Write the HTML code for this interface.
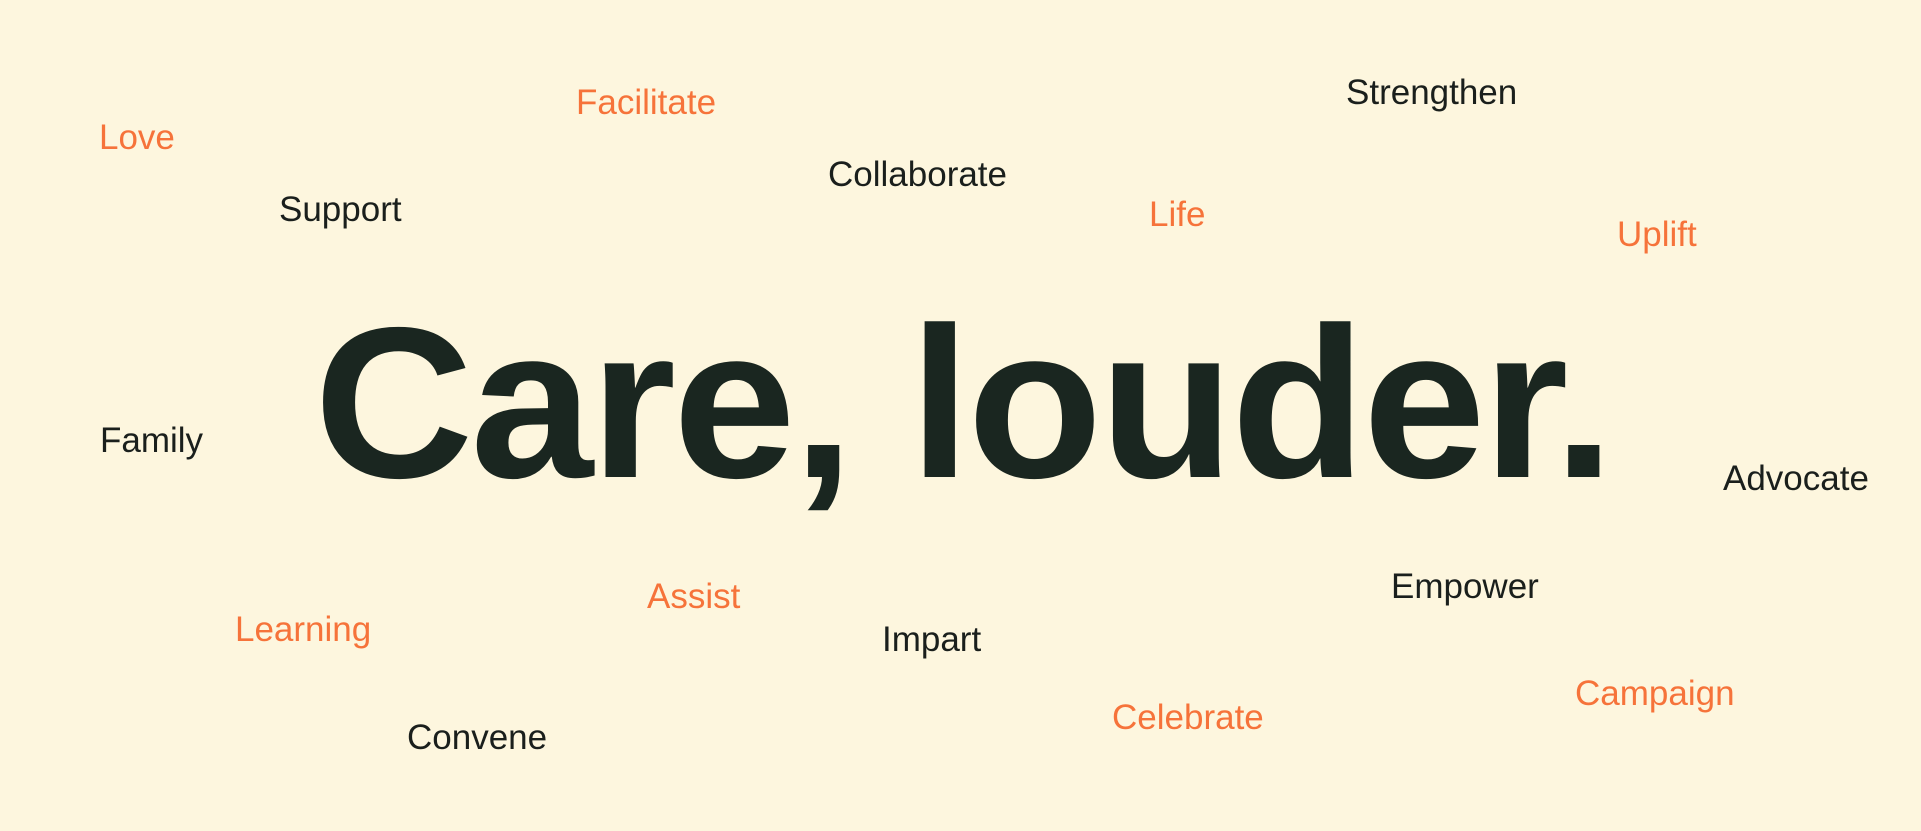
<!DOCTYPE html>
<html><head><meta charset="utf-8"><style>
html,body{margin:0;padding:0}
body{width:1921px;height:831px;background:#fdf6de;position:relative;overflow:hidden;font-family:"Liberation Sans",sans-serif}
.w{position:absolute;font-size:35px;line-height:1;white-space:nowrap;color:#1a1f1c}
.o{color:#f6733a}
.big{position:absolute;left:314px;top:295px;font-size:215px;line-height:1;font-weight:bold;letter-spacing:-3px;color:#1a2620;white-space:nowrap;transform:scaleX(1.027);transform-origin:0 0}
</style></head><body>
<div class="big">Care, louder.</div>
<div class="w o" style="left:99px;top:120px">Love</div>
<div class="w o" style="left:576px;top:85px">Facilitate</div>
<div class="w" style="left:1346px;top:75px">Strengthen</div>
<div class="w" style="left:828px;top:157px">Collaborate</div>
<div class="w" style="left:279px;top:192px">Support</div>
<div class="w o" style="left:1149px;top:197px">Life</div>
<div class="w o" style="left:1617px;top:217px">Uplift</div>
<div class="w" style="left:100px;top:423px">Family</div>
<div class="w" style="left:1723px;top:461px">Advocate</div>
<div class="w o" style="left:647px;top:579px">Assist</div>
<div class="w" style="left:1391px;top:569px">Empower</div>
<div class="w o" style="left:235px;top:612px">Learning</div>
<div class="w" style="left:882px;top:622px">Impart</div>
<div class="w o" style="left:1575px;top:676px">Campaign</div>
<div class="w o" style="left:1112px;top:700px">Celebrate</div>
<div class="w" style="left:407px;top:720px">Convene</div>
</body></html>
